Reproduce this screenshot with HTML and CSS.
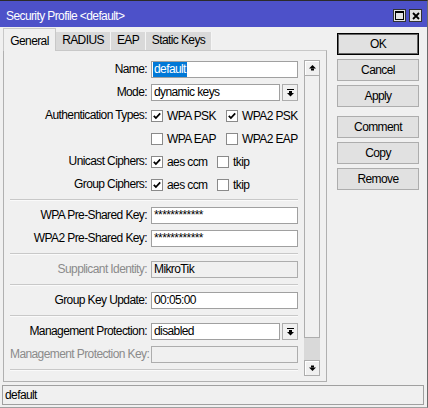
FILE: index.html
```html
<!DOCTYPE html>
<html lang="en">
<head>
  <meta charset="UTF-8" />
  <title>Security Profile &lt;default&gt;</title>
  <link rel="stylesheet" href="styles.css">
</head>
<body>
  <div class="window">
    <div class="titlebar">
      <span class="title">Security Profile &lt;default&gt;</span>
      <div class="title-buttons">
        <span class="tbtn">
          <svg width="9" height="9" viewBox="0 0 9 9"><rect x="0.5" y="0.5" width="8" height="8" fill="none" stroke="#000"/><rect x="0" y="0" width="9" height="2" fill="#000"/></svg>
        </span>
        <span class="tbtn">
          <svg width="8" height="8" viewBox="0 0 8 8"><path d="M1 1L7 7M7 1L1 7" stroke="#000" stroke-width="1.8"/></svg>
        </span>
      </div>
    </div>

    <div class="main">
      <div class="tabview">
        <div class="tabs">
          <div class="tab active tab-general">General</div>
          <div class="tab tab-radius">RADIUS</div>
          <div class="tab tab-eap">EAP</div>
          <div class="tab tab-keys">Static Keys</div>
        </div>

        <div class="panel">
          <div class="form">
            <div class="lbl">Name:</div>
            <div class="input"><span class="sel">default</span></div>

            <div class="lbl">Mode:</div>
            <div class="combo">
              <div class="input">dynamic keys</div>
              <span class="drop"><svg width="7" height="8" viewBox="0 0 7 8"><rect x="0" y="0" width="7" height="1"/><rect x="2" y="2" width="3" height="2"/><path d="M0 4H7L3.5 7.5Z"/></svg></span>
            </div>

            <div class="lbl">Authentication Types:</div>
            <div class="checks auth">
              <div class="check"><span class="cb"><svg width="10" height="10" viewBox="0 0 10 10"><path d="M1.8 4.8L3.9 7L8.2 2.4" fill="none" stroke="#000" stroke-width="1.8"/></svg></span>WPA PSK</div>
              <div class="check"><span class="cb"><svg width="10" height="10" viewBox="0 0 10 10"><path d="M1.8 4.8L3.9 7L8.2 2.4" fill="none" stroke="#000" stroke-width="1.8"/></svg></span>WPA2 PSK</div>
            </div>

            <div class="lbl"></div>
            <div class="checks auth">
              <div class="check"><span class="cb"></span>WPA EAP</div>
              <div class="check"><span class="cb"></span>WPA2 EAP</div>
            </div>

            <div class="lbl">Unicast Ciphers:</div>
            <div class="checks cipher">
              <div class="check"><span class="cb"><svg width="10" height="10" viewBox="0 0 10 10"><path d="M1.8 4.8L3.9 7L8.2 2.4" fill="none" stroke="#000" stroke-width="1.8"/></svg></span>aes ccm</div>
              <div class="check"><span class="cb"></span>tkip</div>
            </div>

            <div class="lbl">Group Ciphers:</div>
            <div class="checks cipher">
              <div class="check"><span class="cb"><svg width="10" height="10" viewBox="0 0 10 10"><path d="M1.8 4.8L3.9 7L8.2 2.4" fill="none" stroke="#000" stroke-width="1.8"/></svg></span>aes ccm</div>
              <div class="check"><span class="cb"></span>tkip</div>
            </div>

            <div class="sep"></div>

            <div class="lbl">WPA Pre-Shared Key:</div>
            <div class="input">************</div>

            <div class="lbl">WPA2 Pre-Shared Key:</div>
            <div class="input">************</div>

            <div class="sep"></div>

            <div class="lbl off">Supplicant Identity:</div>
            <div class="input disabled">MikroTik</div>

            <div class="sep"></div>

            <div class="lbl">Group Key Update:</div>
            <div class="input">00:05:00</div>

            <div class="sep"></div>

            <div class="lbl">Management Protection:</div>
            <div class="combo">
              <div class="input">disabled</div>
              <span class="drop"><svg width="7" height="8" viewBox="0 0 7 8"><rect x="0" y="0" width="7" height="1"/><rect x="2" y="2" width="3" height="2"/><path d="M0 4H7L3.5 7.5Z"/></svg></span>
            </div>

            <div class="lbl off">Management Protection Key:</div>
            <div class="input disabled"></div>

            <div class="sep"></div>
          </div>

          <div class="scrollbar">
            <span class="sb-btn"><svg width="7" height="6" viewBox="0 0 7 6"><path d="M3.5 0L7 3.5H0Z"/><rect x="2" y="3.5" width="3" height="2"/></svg></span>
            <span class="sb-thumb"></span>
            <span class="sb-track"></span>
            <span class="sb-btn"><svg width="7" height="6" viewBox="0 0 7 6"><rect x="2" y="0.5" width="3" height="2"/><path d="M0 2.5H7L3.5 6Z"/></svg></span>
          </div>
        </div>
      </div>

      <div class="actions">
        <button class="btn primary">OK</button>
        <button class="btn">Cancel</button>
        <button class="btn">Apply</button>
        <button class="btn spaced">Comment</button>
        <button class="btn">Copy</button>
        <button class="btn">Remove</button>
      </div>
    </div>

    <div class="statusbar">default</div>
  </div>
</body>
</html>
```

FILE: styles.css
```css
html, body {
  margin: 0; padding: 0;
  background: #f0f0f0;
}
body {
  font-family: "Liberation Sans", Arial, sans-serif;
  font-size: 12px;
  letter-spacing: -0.6px;
  color: #000;
}
.window {
  width: 428px;
  height: 408px;
  box-sizing: border-box;
  border-top: 1px solid #2b2b2b;
  border-right: 1px solid #6b6b6b;
  border-bottom: 1px solid #a0a0a0;
  display: flex;
  flex-direction: column;
}

/* title bar */
.titlebar {
  height: 26px;
  box-sizing: border-box;
  padding: 8px 5px 0 6px;
  background: #4d51c9;
  color: #fff;
  display: flex;
  align-items: flex-start;
}
.title { flex: 1; margin-top: 1px; line-height: 13px; }
.title-buttons { display: flex; gap: 3px; }
.tbtn {
  width: 13px;
  height: 13px;
  box-sizing: border-box;
  border: 1px solid #333;
  background: #e3e3e3;
  display: flex;
  align-items: center;
  justify-content: center;
}

.main {
  display: flex;
  padding: 1px 0 0 3px;
}

/* tabs */
.tabview { width: 324px; }
.tabs {
  display: flex;
  align-items: flex-end;
  height: 22px;
}
.tab {
  height: 18px;
  box-sizing: border-box;
  line-height: 17px;
  text-align: center;
  background: #d9d9d9;
  border-right: 1px solid #f5f5f5;
}
.tab.active {
  height: 23px;
  padding-top: 4px;
  line-height: 16px;
  background: #f0f0f0;
  border: 1px solid #c8c8c8;
  border-bottom: none;
  margin-bottom: -1px;
  position: relative;
  z-index: 1;
}
.tab-general { width: 53px; }
.tab-radius  { width: 55px; }
.tab-eap     { width: 35px; }
.tab-keys    { width: 66px; }

.panel {
  height: 332px;
  box-sizing: border-box;
  border: 1px solid #b0b0b0;
  border-top-color: #c8c8c8;
  display: flex;
  align-items: flex-start;
}

/* form */
.form {
  width: 300px;
  box-sizing: border-box;
  padding: 10px 6px 0;
  display: grid;
  grid-template-columns: 137px 147px;
  column-gap: 4px;
  row-gap: 6px;
}
.lbl {
  height: 17px;
  line-height: 17px;
  text-align: right;
  white-space: nowrap;
}
.lbl.off { color: #8b8b8b; }
.input {
  height: 17px;
  box-sizing: border-box;
  border: 1px solid #a0a0a0;
  background: #fff;
  padding: 0 2px;
  line-height: 15px;
  white-space: nowrap;
  overflow: hidden;
}
.input.disabled {
  background: #f0f0f0;
  border-color: #adadad;
}
.input .sel {
  display: inline-block;
  margin-left: -1px;
  padding: 0 1px;
  background: #0078d7;
  color: #fff;
}
.combo { display: flex; gap: 2px; }
.combo .input { flex: 1; }
.drop {
  width: 16px;
  height: 17px;
  box-sizing: border-box;
  border: 1px solid #adadad;
  background: #f0f0f0;
  display: flex;
  align-items: center;
  justify-content: center;
}

.checks {
  height: 17px;
  display: grid;
  align-items: center;
}
.checks.auth   { grid-template-columns: 75px auto; }
.checks.cipher { grid-template-columns: 66px auto; }
.check {
  display: flex;
  align-items: center;
  gap: 4px;
  white-space: nowrap;
}
.cb {
  width: 12px;
  height: 12px;
  box-sizing: border-box;
  border: 1px solid #8a8a8a;
  background: #fff;
  display: flex;
  align-items: center;
  justify-content: center;
}

.sep {
  grid-column: 1 / -1;
  height: 2px;
  box-sizing: border-box;
  border-top: 1px solid #c8c8c8;
  border-bottom: 1px solid #fafafa;
}

/* scroll bar */
.scrollbar {
  width: 16px;
  height: 316px;
  margin-top: 9px;
  background: #d9d9d9;
  display: flex;
  flex-direction: column;
}
.sb-btn {
  height: 16px;
  box-sizing: border-box;
  border: 1px solid #adadad;
  box-shadow: inset 1px 1px 0 #fff;
  background: #f0f0f0;
  display: flex;
  align-items: center;
  justify-content: center;
}
.sb-thumb {
  height: 262px;
  box-sizing: border-box;
  border: 1px solid #adadad;
  border-top: none;
  background: #f0f0f0;
}
.sb-track { flex: 1; }

/* buttons */
.actions {
  width: 82px;
  margin: 5px 0 0 10px;
  display: flex;
  flex-direction: column;
  gap: 4px;
}
.btn {
  height: 22px;
  padding: 0;
  border: 1px solid #adadad;
  background: #e1e1e1;
  color: #000;
  font: inherit;
  letter-spacing: inherit;
}
.btn.primary {
  border-color: #000;
  box-shadow: inset 0 0 0 1px rgba(0,0,0,0.55);
}
.btn.spaced { margin-top: 5px; }

.statusbar {
  margin: 3px 3px 0 2px;
  height: 20px;
  box-sizing: border-box;
  border: 1px solid #a0a0a0;
  padding-left: 2px;
  line-height: 18px;
}
```
